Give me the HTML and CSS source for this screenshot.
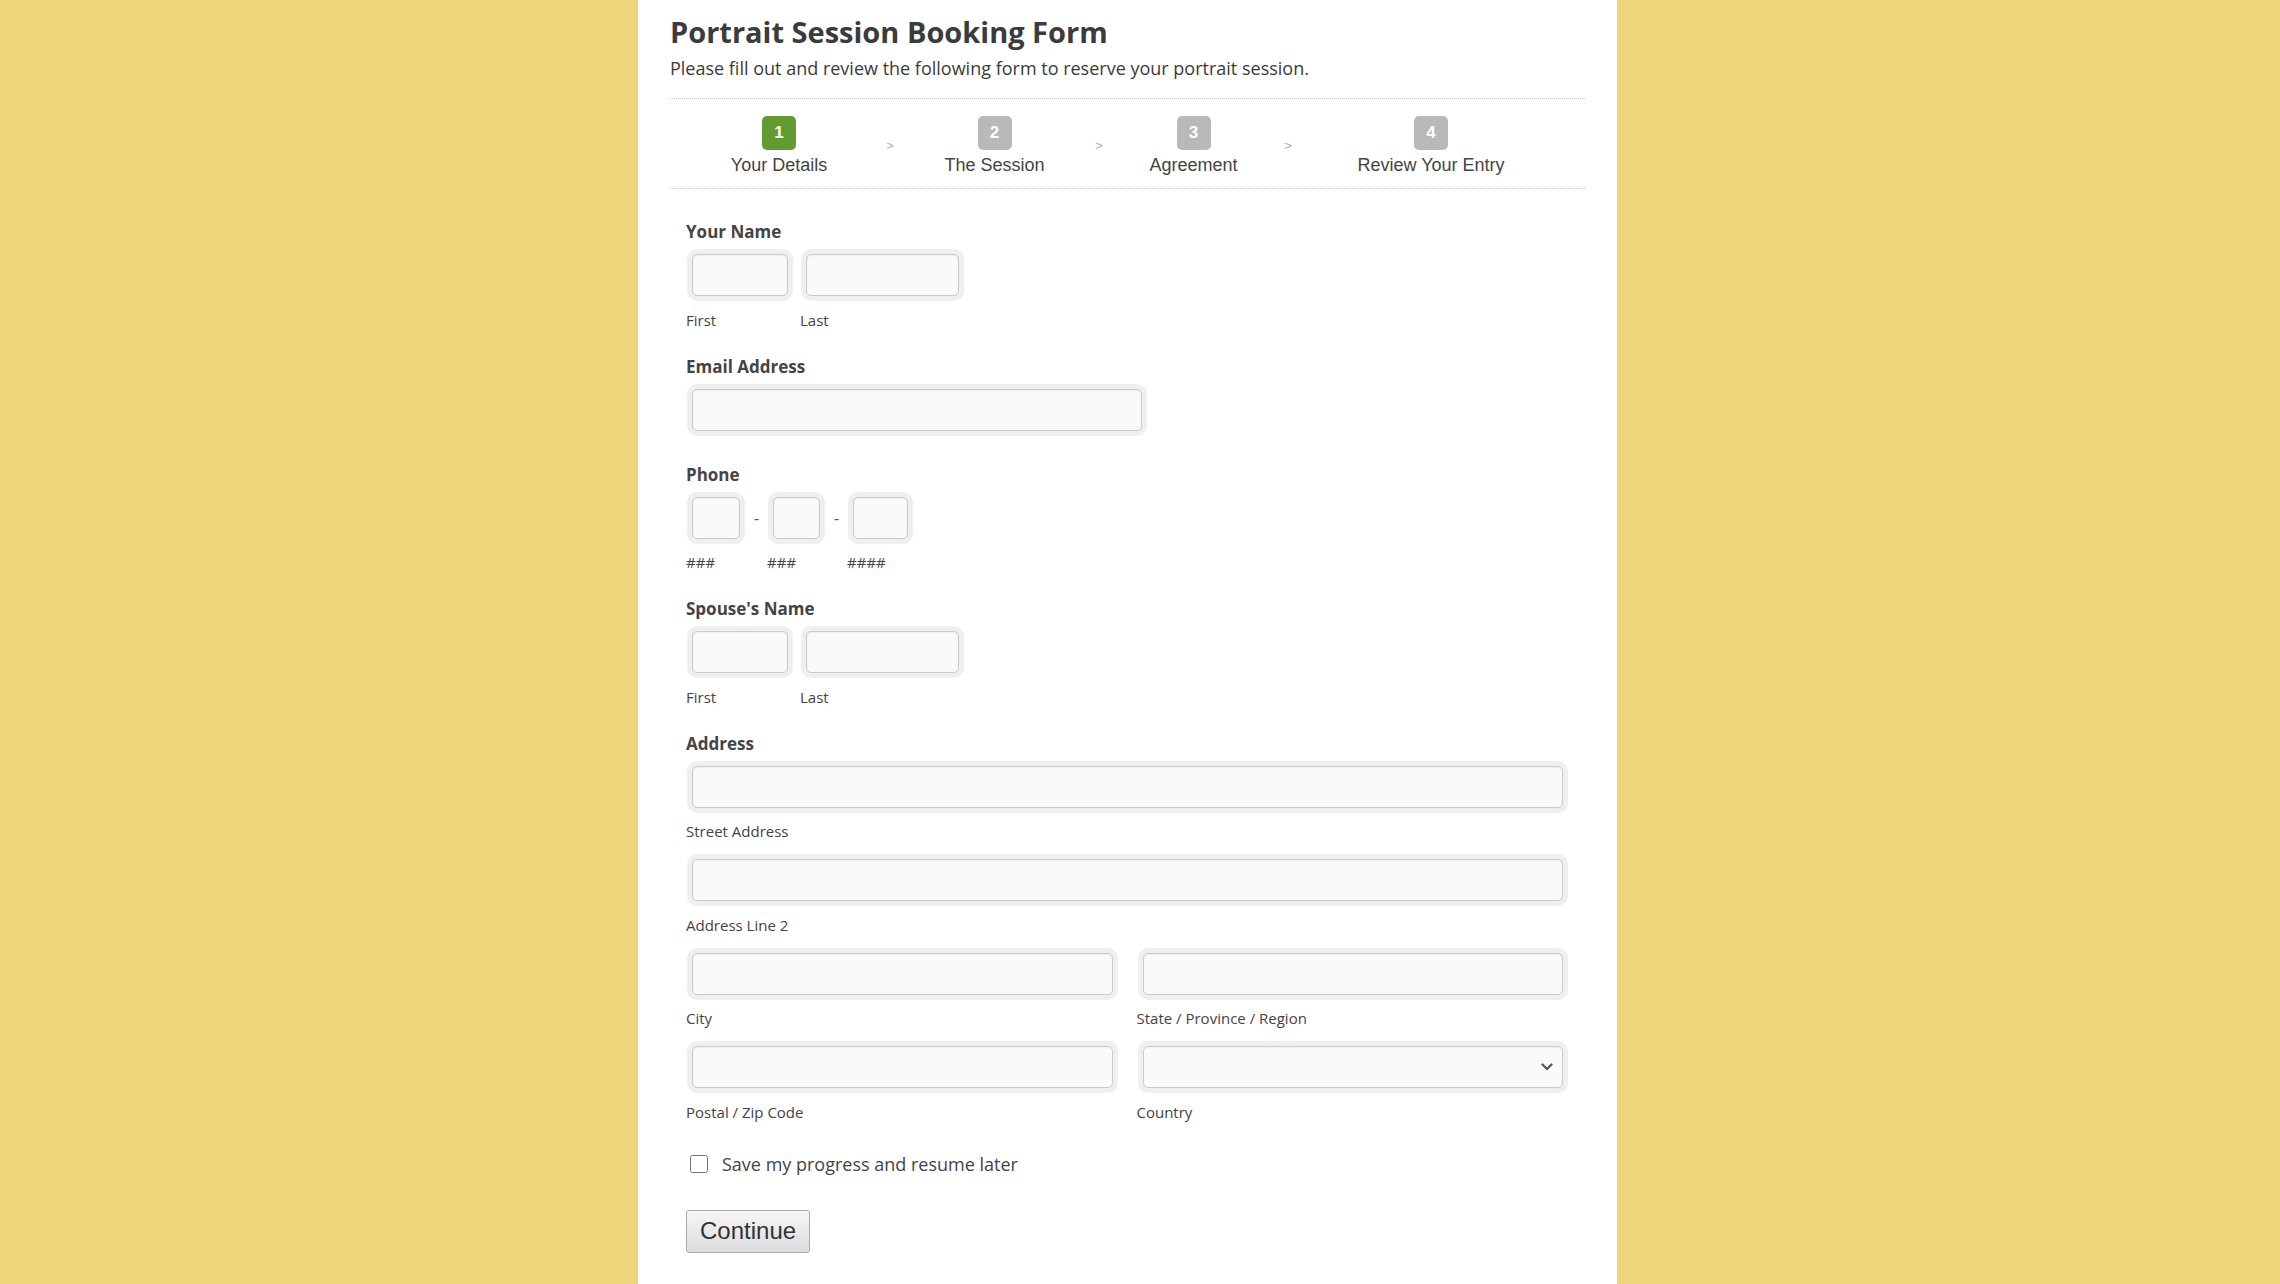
FILE: index.html
```html
<!DOCTYPE html>
<html lang="en">
<head>
    <meta charset="UTF-8">
    <meta name="viewport" content="width=device-width, initial-scale=1.0">
    <title>Portrait Session Booking Form</title>
    <link rel="stylesheet" href="styles.css">
</head>
<body>
    <div class="page">
        <header class="form-header">
            <h1 class="form-title">Portrait Session Booking Form</h1>
            <p class="form-desc">Please fill out and review the following form to reserve your portrait session.</p>
        </header>

        <div class="steps">
            <div class="step active">
                <span class="step-num">1</span>
                <span class="step-name">Your Details</span>
            </div>
            <div class="step-sep">&gt;</div>
            <div class="step">
                <span class="step-num">2</span>
                <span class="step-name">The Session</span>
            </div>
            <div class="step-sep">&gt;</div>
            <div class="step">
                <span class="step-num">3</span>
                <span class="step-name">Agreement</span>
            </div>
            <div class="step-sep">&gt;</div>
            <div class="step">
                <span class="step-num">4</span>
                <span class="step-name">Review Your Entry</span>
            </div>
        </div>

        <form class="form-body" onsubmit="return false;">
            <div class="field">
                <label class="field-label">Your Name</label>
                <div class="field-row">
                    <div class="sub">
                        <input type="text" class="in in-first">
                        <span class="sub-label">First</span>
                    </div>
                    <div class="sub">
                        <input type="text" class="in in-last">
                        <span class="sub-label">Last</span>
                    </div>
                </div>
            </div>

            <div class="field">
                <label class="field-label">Email Address</label>
                <input type="email" class="in in-email">
            </div>

            <div class="field">
                <label class="field-label">Phone</label>
                <div class="field-row">
                    <div class="sub">
                        <input type="tel" class="in in-ph3">
                        <span class="sub-label">###</span>
                    </div>
                    <span class="dash">-</span>
                    <div class="sub">
                        <input type="tel" class="in in-ph3b">
                        <span class="sub-label">###</span>
                    </div>
                    <span class="dash">-</span>
                    <div class="sub">
                        <input type="tel" class="in in-ph4">
                        <span class="sub-label">####</span>
                    </div>
                </div>
            </div>

            <div class="field">
                <label class="field-label">Spouse's Name</label>
                <div class="field-row">
                    <div class="sub">
                        <input type="text" class="in in-first">
                        <span class="sub-label">First</span>
                    </div>
                    <div class="sub">
                        <input type="text" class="in in-last">
                        <span class="sub-label">Last</span>
                    </div>
                </div>
            </div>

            <div class="field">
                <label class="field-label">Address</label>
                <div class="addr">
                    <div class="sub addr-full">
                        <input type="text" class="in in-wide">
                        <span class="sub-label">Street Address</span>
                    </div>
                    <div class="sub addr-full">
                        <input type="text" class="in in-wide">
                        <span class="sub-label">Address Line 2</span>
                    </div>
                    <div class="sub">
                        <input type="text" class="in in-wide">
                        <span class="sub-label">City</span>
                    </div>
                    <div class="sub">
                        <input type="text" class="in in-wide">
                        <span class="sub-label">State / Province / Region</span>
                    </div>
                    <div class="sub">
                        <input type="text" class="in in-wide">
                        <span class="sub-label">Postal / Zip Code</span>
                    </div>
                    <div class="sub">
                        <div class="select-wrap">
                            <select class="in in-select">
                                <option></option>
                            </select>
                            <svg class="chevron" width="12" height="8" viewBox="0 0 12 8">
                                <path d="M1.5 1.5 L6 6 L10.5 1.5" fill="none" stroke="#555" stroke-width="2.2" stroke-linecap="round" stroke-linejoin="round"/>
                            </svg>
                        </div>
                        <span class="sub-label">Country</span>
                    </div>
                </div>
            </div>

            <label class="save-row">
                <input type="checkbox" class="save-check">
                <span>Save my progress and resume later</span>
            </label>

            <button type="submit" class="btn-continue">Continue</button>
        </form>
    </div>
</body>
</html>
```

FILE: styles.css
```css
body {
    margin: 0;
    background-color: #edd57a;
    font-family: 'Open Sans', 'Noto Sans', sans-serif;
    color: #444;
}

.page {
    width: 979px;
    min-height: 1284px;
    margin-left: 638px;
    background-color: #fff;
    padding: 0 32px;
    box-sizing: border-box;
}

.form-header {
    padding: 14px 0 18px;
    border-bottom: 1px dotted #c4c4c4;
}

.form-title {
    margin: 0;
    font-size: 29px;
    line-height: 36px;
    font-weight: bold;
    color: #3b3b3b;
}

.form-desc {
    margin: 6px 0 0;
    font-size: 18px;
    line-height: 24px;
    color: #3b3b3b;
}

/* pasos */
.steps {
    display: grid;
    grid-template-columns: 202px 20px 189px 20px 169px 20px 266px;
    padding: 17px 0 12px 8px;
    border-bottom: 1px dotted #c4c4c4;
    font-family: 'Liberation Sans', Arial, sans-serif;
}

.step {
    display: flex;
    flex-direction: column;
    align-items: center;
}

.step-num {
    width: 34px;
    height: 34px;
    border-radius: 5px;
    background-color: #b9b9b9;
    color: #fff;
    font-size: 17px;
    font-weight: bold;
    line-height: 34px;
    text-align: center;
}

.step.active .step-num {
    background-color: #629c30;
}

.step-name {
    margin-top: 4px;
    font-size: 18px;
    line-height: 22px;
    color: #444;
}

.step-sep {
    padding-top: 22px;
    font-size: 13px;
    line-height: 16px;
    color: #b0b0b0;
    text-align: center;
}

/* campos */
.form-body {
    padding: 32px 16px 0;
}

.field {
    display: flex;
    flex-direction: column;
    align-items: flex-start;
    margin-bottom: 27px;
}

.field-label {
    display: block;
    margin-bottom: 5px;
    font-size: 17px;
    line-height: 22px;
    font-weight: bold;
    color: #444;
}

.field-row {
    display: flex;
    align-items: flex-start;
}

.sub {
    display: flex;
    flex-direction: column;
    align-items: flex-start;
}

.sub + .sub {
    margin-left: 6px;
}

.sub-label {
    margin-top: 8.5px;
    font-size: 15px;
    line-height: 18px;
    color: #444;
}

.in {
    display: block;
    box-sizing: border-box;
    height: 42px;
    margin: 6px;
    border: 1px solid #cacaca;
    border-radius: 5px;
    background-color: #fafafa;
    box-shadow: 0 0 1px 5px #efefef, inset 0 1px 2px rgba(0, 0, 0, 0.05);
    font-family: inherit;
    font-size: 16px;
    padding: 0 8px;
}

.in-first { width: 96px; }
.in-last { width: 153px; }
.in-email { width: 450px; }
.in-ph3 { width: 48px; }
.in-ph3b { width: 47px; }
.in-ph4 { width: 55px; }

.dash {
    width: 21px;
    margin-top: 13px;
    font-size: 16px;
    line-height: 28px;
    text-align: center;
    color: #555;
}

.addr {
    display: grid;
    grid-template-columns: 1fr 1fr;
    column-gap: 18px;
    row-gap: 13px;
    align-self: stretch;
}

.addr .sub + .sub {
    margin-left: 0;
}

.addr-full {
    grid-column: 1 / 3;
}

.in-wide {
    width: calc(100% - 12px);
}

.select-wrap {
    position: relative;
    width: 100%;
}

.in-select {
    width: calc(100% - 12px);
    appearance: none;
    -webkit-appearance: none;
    color: #444;
}

.chevron {
    position: absolute;
    right: 16px;
    top: 23px;
}

.save-row {
    display: flex;
    align-items: center;
    margin-top: 31px;
    font-size: 18px;
    line-height: 24px;
    color: #444;
}

.save-check {
    width: 18px;
    height: 18px;
    margin: 0 14px 0 4px;
}

.btn-continue {
    display: block;
    margin-top: 34px;
    height: 43px;
    padding: 0 13px;
    border: 1px solid #a9a9a9;
    border-radius: 3px;
    background: linear-gradient(to bottom, #f7f7f7, #dcdcdc);
    font-family: 'Liberation Sans', Arial, sans-serif;
    font-size: 24px;
    color: #333;
    cursor: pointer;
}
```
